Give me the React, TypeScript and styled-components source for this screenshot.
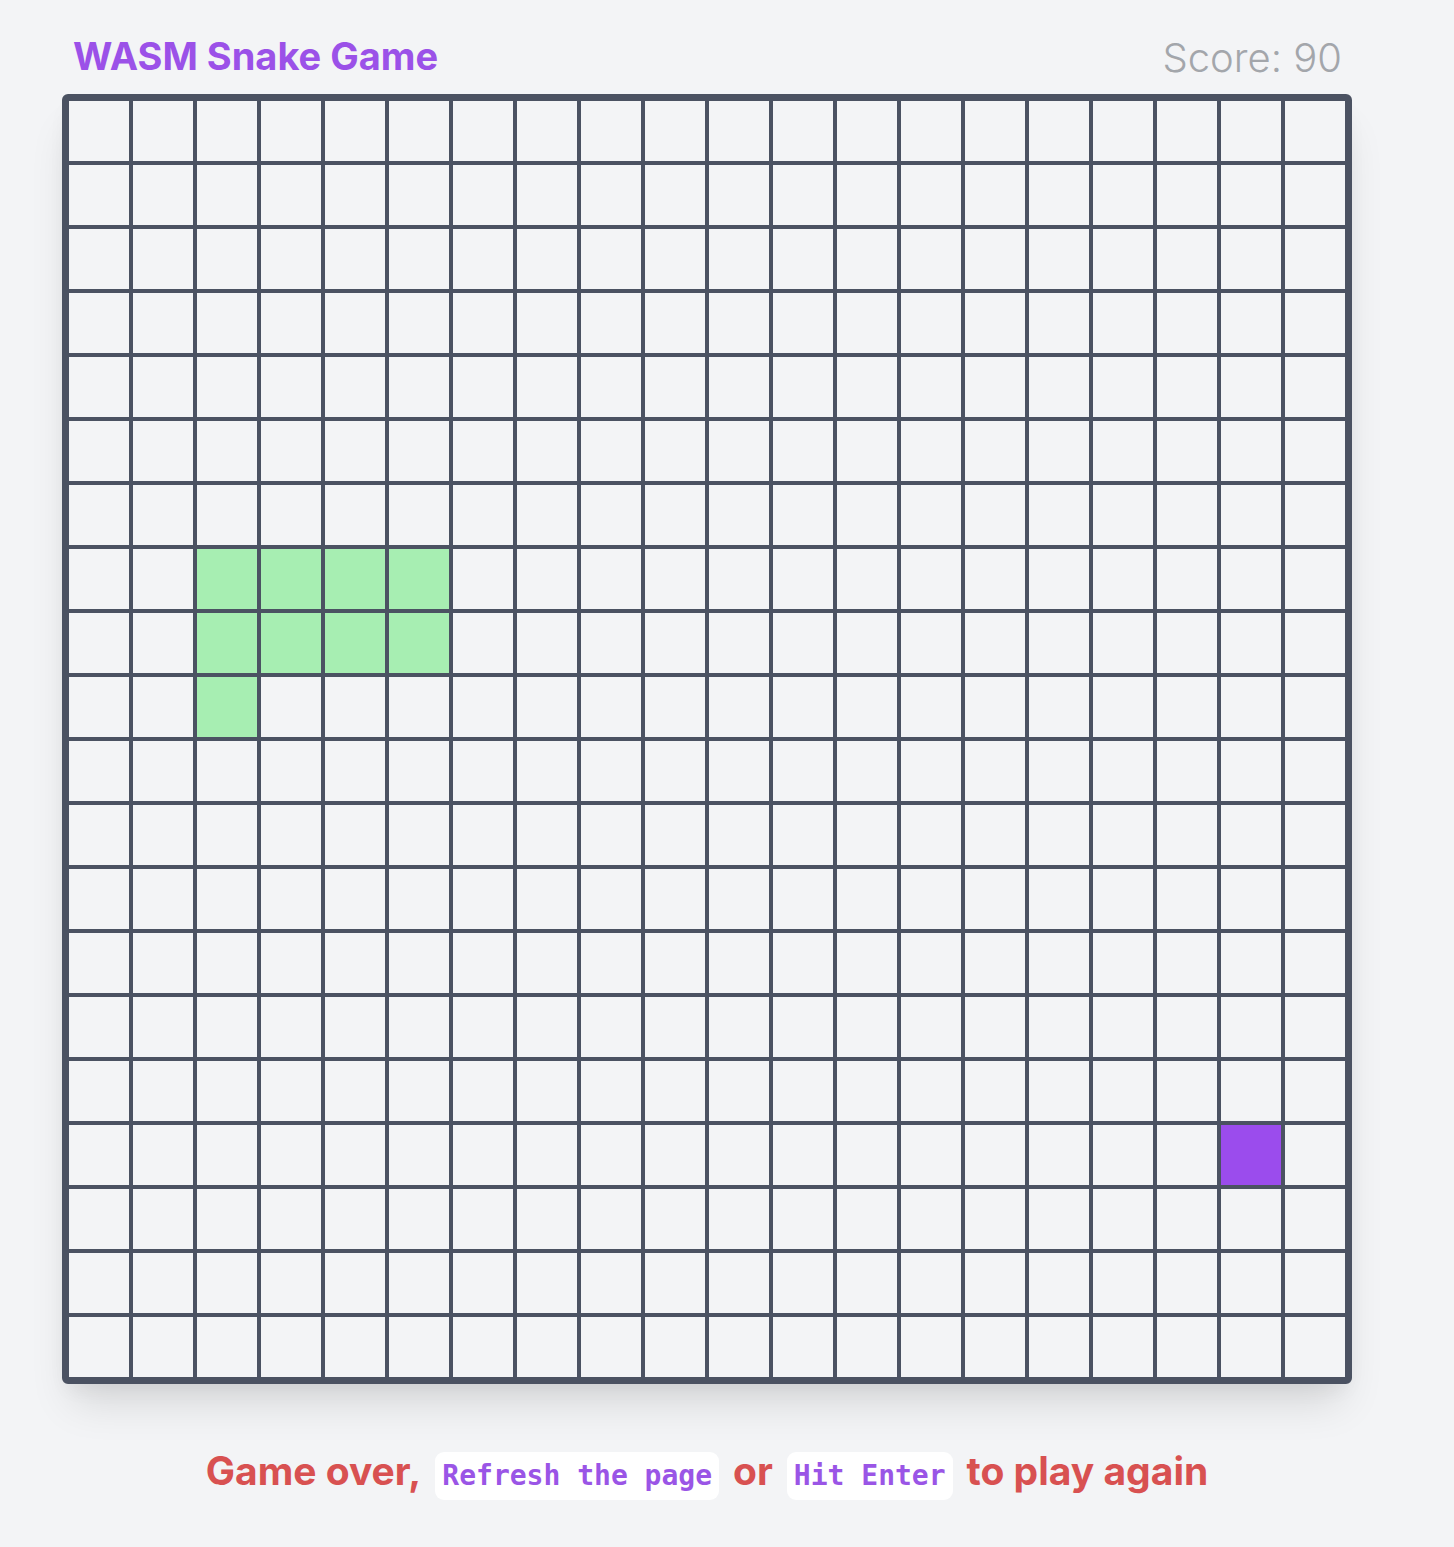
import React from "react";
import styled, { createGlobalStyle } from "styled-components";

const Global = createGlobalStyle`
  html, body { margin: 0; padding: 0; background: #f3f4f6; }
  body { font-family: Inter, "Liberation Sans", Arial, sans-serif; }
`;

const Page = styled.div`
  width: 1290px;
  margin-left: 62px;
  display: flex;
  flex-direction: column;
`;

const Header = styled.header`
  height: 94px;
  box-sizing: border-box;
  padding: 0 10px 19px 11px;
  display: flex;
  justify-content: space-between;
  align-items: flex-end;
`;

const Title = styled.h1`
  margin: 0;
  font-family: Inter, "Liberation Sans", sans-serif;
  font-weight: 700;
  font-size: 38px;
  line-height: 1;
  color: #9b51e8;
`;

const Score = styled.div`
  font-family: Inter, "Liberation Sans", sans-serif;
  font-weight: 300;
  font-size: 40px;
  line-height: 1;
  color: #a3a6ab;
  margin-bottom: -3px;
`;

const Board = styled.div`
  display: grid;
  grid-template-columns: repeat(20, 64px);
  grid-template-rows: repeat(20, 64px);
  border: 5px solid #4b5262;
  border-radius: 6px;
  background: #4b5262;
  box-shadow: 0 28px 40px -10px rgba(0, 0, 0, 0.12), 0 10px 20px -6px rgba(0, 0, 0, 0.06);
`;

const Cell = styled.div<{ $kind: "empty" | "snake" | "food" }>`
  box-sizing: border-box;
  border: 2px solid #4b5262;
  background: ${(p) =>
    p.$kind === "snake" ? "#a7eeb2" : p.$kind === "food" ? "#9b4ced" : "#f3f4f6"};
`;

const Footer = styled.p`
  margin: 67px 0 0;
  display: flex;
  justify-content: center;
  align-items: baseline;
  gap: 14px;
  font-family: Inter, "Liberation Sans", sans-serif;
  font-weight: 700;
  font-size: 39px;
  color: #d85151;
  line-height: 1;
`;

const Key = styled.code`
  background: #ffffff;
  border-radius: 9px;
  padding: 0 7px;
  height: 48px;
  display: inline-flex;
  align-items: center;
  font-family: "DejaVu Sans Mono", "Liberation Mono", monospace;
  font-weight: 700;
  font-size: 28px;
  color: #9a55e6;
`;

const snake = new Set([
  "7-2", "7-3", "7-4", "7-5",
  "8-2", "8-3", "8-4", "8-5",
  "9-2",
]);
const food = "16-18";

export default function App() {
  const cells = [];
  for (let r = 0; r < 20; r++) {
    for (let c = 0; c < 20; c++) {
      const k = `${r}-${c}`;
      const kind = snake.has(k) ? "snake" : k === food ? "food" : "empty";
      cells.push(<Cell key={k} $kind={kind} />);
    }
  }
  return (
    <>
      <Global />
      <Page>
        <Header>
          <Title>WASM Snake Game</Title>
          <Score>Score: 90</Score>
        </Header>
        <Board>{cells}</Board>
        <Footer>
          <span>Game over,</span>
          <Key>Refresh the page</Key>
          <span>or</span>
          <Key>Hit Enter</Key>
          <span>to play again</span>
        </Footer>
      </Page>
    </>
  );
}
